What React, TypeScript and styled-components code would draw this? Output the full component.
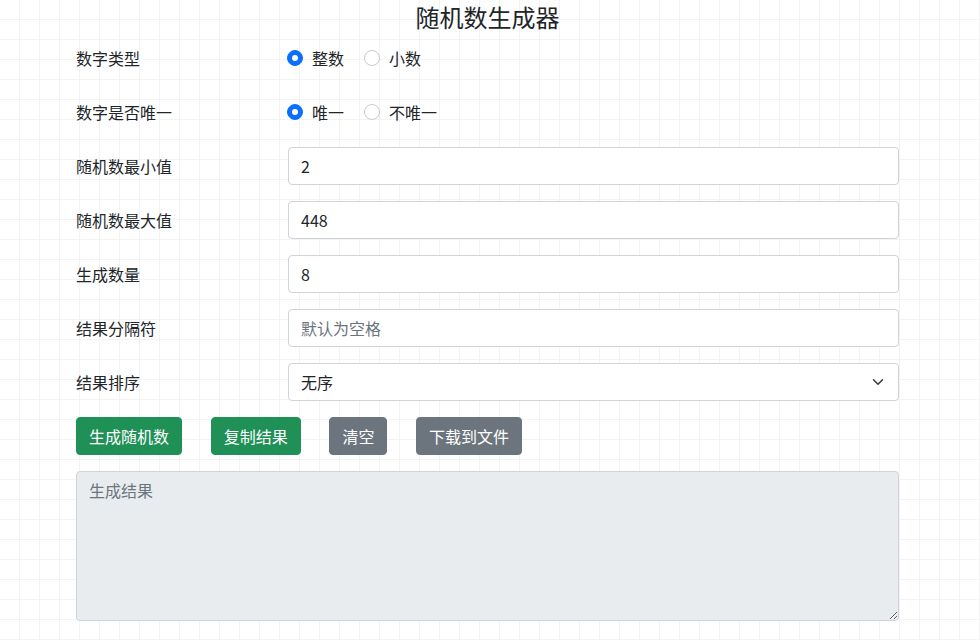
import React from "react";
import styled, { createGlobalStyle } from "styled-components";

const Global = createGlobalStyle`
  html, body { margin: 0; padding: 0; height: 100%; overflow: hidden; }
  body {
    background-color: #fff;
    background-image:
      linear-gradient(to right, transparent 19px, #f3f3f3 19px),
      linear-gradient(to bottom, transparent 19px, #f3f3f3 19px);
    background-size: 20px 20px;
    font-family: "Microsoft YaHei", "Noto Sans CJK SC", "Noto Sans", sans-serif;
    color: #212529;
    font-size: 16px;
  }
  * { box-sizing: border-box; }
`;

const Container = styled.div`
  width: 823px;
  margin-left: 76px;
  display: flex;
  flex-direction: column;
`;

const Title = styled.h1`
  margin: 0 0 5px;
  font-size: 24px;
  font-weight: 400;
  line-height: 34px;
  text-align: center;
  color: #212529;
`;

const Row = styled.div`
  display: grid;
  grid-template-columns: 212px 1fr;
  align-items: center;
  height: 38px;
  margin-bottom: 16px;
`;

const Label = styled.div`
  font-size: 16px;
  line-height: 24px;
`;

const RadioGroup = styled.div`
  display: flex;
  align-items: center;
  gap: 21px;
`;

const RadioItem = styled.label`
  display: flex;
  align-items: center;
  gap: 9px;
  font-size: 16px;
  line-height: 24px;
`;

const RadioDot = styled.span<{ $checked?: boolean }>`
  width: 16px;
  height: 16px;
  border-radius: 50%;
  flex: none;
  background: ${(p) => (p.$checked ? "#0d6efd" : "#fff")};
  border: 1px solid ${(p) => (p.$checked ? "#0d6efd" : "#c8cbce")};
  display: flex;
  align-items: center;
  justify-content: center;
  margin-left: -1px;
  &::after {
    content: "";
    display: ${(p) => (p.$checked ? "block" : "none")};
    width: 6px;
    height: 6px;
    border-radius: 50%;
    background: #fff;
  }
`;

const Input = styled.input`
  width: 100%;
  height: 38px;
  padding: 6px 12px;
  font-size: 16px;
  font-family: inherit;
  color: #212529;
  background: #fff;
  border: 1px solid #ced4da;
  border-radius: 4px;
  outline: none;
  &::placeholder { color: #6c757d; }
`;

const SelectBox = styled.div`
  position: relative;
  height: 38px;
  padding: 6px 12px;
  display: flex;
  align-items: center;
  border: 1px solid #ced4da;
  border-radius: 4px;
  background: #fff;
  font-size: 16px;
`;

const Chevron = styled.svg`
  position: absolute;
  right: 12px;
  top: 12px;
`;

const Buttons = styled.div`
  display: flex;
  gap: 28.7px;
  margin-bottom: 16px;
`;

const Button = styled.button<{ $variant: "success" | "secondary" }>`
  height: 38px;
  padding: 6px 12px;
  font-size: 16px;
  font-family: inherit;
  color: #fff;
  border: 1px solid ${(p) => (p.$variant === "success" ? "#1f9157" : "#6c757d")};
  background: ${(p) => (p.$variant === "success" ? "#1f9157" : "#6c757d")};
  border-radius: 4px;
  line-height: 24px;
`;

const Result = styled.textarea`
  width: 100%;
  height: 150px;
  padding: 6px 12px;
  font-size: 16px;
  font-family: inherit;
  line-height: 24px;
  background: #e9ecef;
  border: 1px solid #ced4da;
  border-radius: 4px;
  color: #212529;
  outline: none;
  &::placeholder { color: #6c757d; }
`;

export default function App() {
  return (
    <>
      <Global />
      <Container>
        <Title>随机数生成器</Title>
        <Row>
          <Label>数字类型</Label>
          <RadioGroup>
            <RadioItem><RadioDot $checked />整数</RadioItem>
            <RadioItem><RadioDot />小数</RadioItem>
          </RadioGroup>
        </Row>
        <Row>
          <Label>数字是否唯一</Label>
          <RadioGroup>
            <RadioItem><RadioDot $checked />唯一</RadioItem>
            <RadioItem><RadioDot />不唯一</RadioItem>
          </RadioGroup>
        </Row>
        <Row>
          <Label>随机数最小值</Label>
          <Input defaultValue="2" />
        </Row>
        <Row>
          <Label>随机数最大值</Label>
          <Input defaultValue="448" />
        </Row>
        <Row>
          <Label>生成数量</Label>
          <Input defaultValue="8" />
        </Row>
        <Row>
          <Label>结果分隔符</Label>
          <Input placeholder="默认为空格" />
        </Row>
        <Row>
          <Label>结果排序</Label>
          <SelectBox>
            无序
            <Chevron width="16" height="12" viewBox="0 0 16 16">
              <path d="M2 5l6 6 6-6" fill="none" stroke="#343a40" strokeWidth="2" strokeLinecap="round" strokeLinejoin="round" />
            </Chevron>
          </SelectBox>
        </Row>
        <Buttons>
          <Button $variant="success">生成随机数</Button>
          <Button $variant="success">复制结果</Button>
          <Button $variant="secondary">清空</Button>
          <Button $variant="secondary">下载到文件</Button>
        </Buttons>
        <Result placeholder="生成结果" readOnly />
      </Container>
    </>
  );
}
